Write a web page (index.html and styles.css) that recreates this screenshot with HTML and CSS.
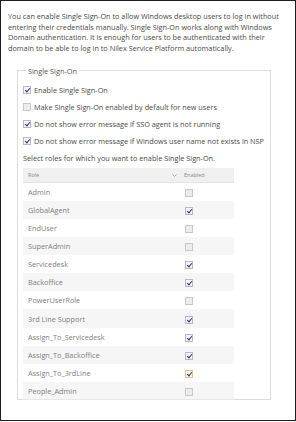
FILE: index.html
```html
<!DOCTYPE html>
<html lang="en">
<head>
  <meta charset="UTF-8">
  <title>Single Sign-On</title>
  <link rel="stylesheet" href="styles.css">
</head>
<body>
  <div class="page">
    <p class="intro">You can enable Single Sign-On to allow Windows desktop users to log in without entering their credentials manually. Single Sign-On works along with Windows Domain authentication. It is enough for users to be authenticated with their domain to be able to log in to Nilex Service Platform automatically.</p>

    <fieldset class="sso">
      <legend>Single Sign-On</legend>
      <label class="option"><span class="box checked"></span>Enable Single Sign-On</label>
      <label class="option"><span class="box"></span>Make Single Sign-On enabled by default for new users</label>
      <label class="option"><span class="box checked"></span>Do not show error message if SSO agent is not running</label>
      <label class="option"><span class="box checked"></span>Do not show error message if Windows user name not exists in NSP</label>
      <p class="hint">Select roles for which you want to enable Single Sign-On.</p>

      <table class="roles">
        <thead>
          <tr>
            <th class="col-role">Role</th>
            <th class="col-sort"><svg width="5" height="3" viewBox="0 0 5 3"><path d="M0.5 0.5 L2.5 2.5 L4.5 0.5" fill="none" stroke="#999" stroke-width="0.8"/></svg></th>
            <th class="col-enabled">Enabled</th>
          </tr>
        </thead>
        <tbody>
          <tr><td>Admin</td><td></td><td><span class="box"></span></td></tr>
          <tr><td>GlobalAgent</td><td></td><td><span class="box checked"></span></td></tr>
          <tr><td>EndUser</td><td></td><td><span class="box"></span></td></tr>
          <tr><td>SuperAdmin</td><td></td><td><span class="box"></span></td></tr>
          <tr><td>Servicedesk</td><td></td><td><span class="box checked"></span></td></tr>
          <tr><td>Backoffice</td><td></td><td><span class="box checked"></span></td></tr>
          <tr><td>PowerUserRole</td><td></td><td><span class="box"></span></td></tr>
          <tr><td>3rd Line Support</td><td></td><td><span class="box checked"></span></td></tr>
          <tr><td>Assign_To_Servicedesk</td><td></td><td><span class="box checked"></span></td></tr>
          <tr><td>Assign_To_Backoffice</td><td></td><td><span class="box checked"></span></td></tr>
          <tr><td>Assign_To_3rdLine</td><td></td><td><span class="box checked focus"></span></td></tr>
          <tr><td>People_Admin</td><td></td><td><span class="box"></span></td></tr>
        </tbody>
      </table>
    </fieldset>
  </div>
</body>
</html>
```

FILE: styles.css
```css
* { margin: 0; padding: 0; box-sizing: border-box; font-family: 'Open Sans', 'Noto Sans', sans-serif; }
body { background-color: #fff; }
.page {
  width: 296px;
  height: 421px;
  border: 1px solid #1e1e1e;
  padding: 10px 7px 0 7px;
  color: #4a4a4a;
}
.intro {
  font-size: 7.3px;
  line-height: 10.7px;
}

/* Single Sign-On group */
.sso {
  margin: 12px 17px 0 9px;
  border: 1px solid #dcdcdc;
  padding: 6px 5px 5px 5px;
  height: 334px;
}
.sso legend {
  margin-left: 3px;
  padding: 0 2px;
  font-size: 7.3px;
  color: #555;
}
.option {
  display: flex;
  align-items: center;
  height: 17px;
  font-size: 7.3px;
  color: #4a4a4a;
}
.option .box { margin-right: 3px; }
.hint {
  font-size: 7.3px;
  line-height: 16px;
  color: #4a4a4a;
}

/* Checkbox */
.box {
  display: inline-block;
  width: 8px;
  height: 8px;
  border: 1px solid #c8c8c8;
  background-color: #ececec;
  position: relative;
  vertical-align: middle;
}
.box.checked { background-color: #f2f2f7; border-color: #b8b8c6; }
.box.checked::after {
  content: '';
  position: absolute;
  left: 2px;
  top: 0;
  width: 2px;
  height: 4px;
  border: solid #35356a;
  border-width: 0 1.5px 1.5px 0;
  transform: rotate(40deg);
}
.box.focus { border-color: #e2c48a; }

/* Roles table */
.roles {
  width: 211px;
  border-collapse: collapse;
  margin-top: 2px;
  color: #808080;
}
.roles th {
  height: 15px;
  background-color: #f0f0f0;
  font-size: 5.5px;
  font-weight: normal;
  text-align: left;
  color: #8a8a8a;
  border-bottom: 1px solid #e4e4e4;
}
.roles .col-role { padding-left: 5px; }
.roles .col-sort { width: 12px; }
.roles .col-sort svg { display: block; }
.roles .col-enabled { width: 50px; }
.roles td {
  height: 18.1px;
  font-size: 7.3px;
  padding-left: 5px;
}
.roles td:last-child { padding-left: 1px; }
.roles td:nth-child(2) { padding-left: 0; }
.roles tbody tr:nth-child(even) td { background-color: #f6f6f6; }
.roles tbody tr:last-child td { border-bottom: 1px solid #e8e8e8; }
```
